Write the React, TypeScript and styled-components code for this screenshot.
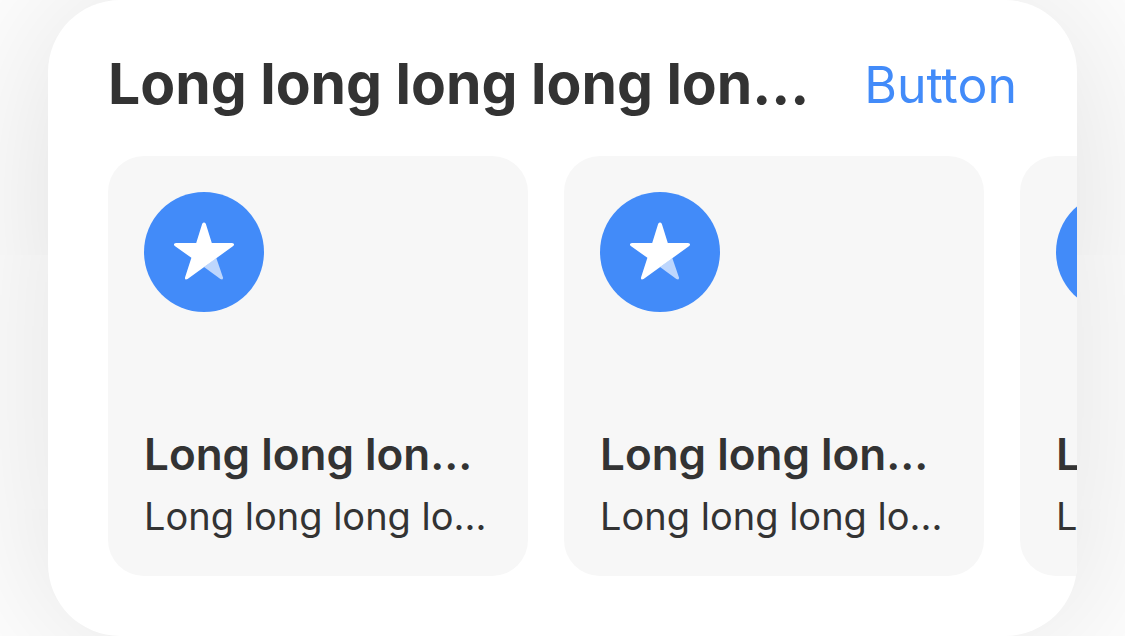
import React from "react";
import styled, { createGlobalStyle } from "styled-components";

const GlobalStyle = createGlobalStyle`
  *, *::before, *::after {
    box-sizing: border-box;
  }
  body {
    margin: 0;
    background: #fff;
    color: #333;
    font-family: Inter, "Liberation Sans", sans-serif;
    overflow: hidden;
  }
`;

const Page = styled.main`
  padding: 0 48px;
`;

const Panel = styled.section`
  padding: 48px 0 60px;
  border-radius: 72px;
  background: #fff;
  box-shadow: 0 0 180px rgba(0, 0, 0, 0.14);
  overflow: hidden;
`;

const Header = styled.header`
  display: flex;
  align-items: flex-start;
  gap: 36px;
  height: 72px;
  margin: 0 60px 36px;
`;

const Title = styled.h2`
  flex: 1;
  min-width: 0;
  margin: 0;
  font-size: 57px;
  line-height: 72px;
  font-weight: 700;
  white-space: nowrap;
  overflow: hidden;
  text-overflow: ellipsis;
`;

const TextButton = styled.button`
  flex: none;
  padding: 0;
  border: 0;
  background: none;
  color: #428bf9;
  font: inherit;
  font-size: 50px;
  line-height: 74px;
  cursor: pointer;
`;

const Cards = styled.ul`
  display: flex;
  gap: 36px;
  margin: 0;
  padding: 0 60px;
  list-style: none;
`;

const Card = styled.li`
  display: flex;
  flex: none;
  flex-direction: column;
  justify-content: space-between;
  width: 420px;
  height: 420px;
  padding: 36px 36px 31px;
  border-radius: 36px;
  background: #f7f7f7;
`;

const Badge = styled.div`
  display: grid;
  place-items: center;
  width: 120px;
  height: 120px;
  border-radius: 50%;
  background: #428bf9;
`;

const CardTitle = styled.h3`
  margin: 0;
  font-size: 44px;
  line-height: 66px;
  font-weight: 600;
  white-space: nowrap;
  overflow: hidden;
  text-overflow: ellipsis;
`;

const CardText = styled.p`
  margin: 0;
  font-size: 38px;
  line-height: 58px;
  white-space: nowrap;
  overflow: hidden;
  text-overflow: ellipsis;
`;

const StarIcon = () => (
  <svg width="72" height="72" viewBox="0 0 72 72" aria-hidden="true">
    <path
      d="M36 51 48.3 42 54.9 61.2Q55.6 64.3 52.4 63Z"
      fill="#fff"
      fillOpacity="0.65"
    />
    <path
      d="M34.2 7.8Q36 5 37.8 7.8L43.8 27H64Q67.4 27.6 65.2 30L19.6 63Q16.4 64.3 17.1 61.2L23.4 41.8 6.8 30Q4.6 27.6 8 27H28.2Z"
      fill="#fff"
    />
  </svg>
);

const items = [1, 2, 3];

export default function App() {
  return (
    <>
      <GlobalStyle />
      <Page>
        <Panel>
          <Header>
            <Title>Long long long long lon...</Title>
            <TextButton type="button">Button</TextButton>
          </Header>
          <Cards>
            {items.map((id) => (
              <Card key={id}>
                <Badge>
                  <StarIcon />
                </Badge>
                <div>
                  <CardTitle>Long long lon...</CardTitle>
                  <CardText>Long long long lo...</CardText>
                </div>
              </Card>
            ))}
          </Cards>
        </Panel>
      </Page>
    </>
  );
}
